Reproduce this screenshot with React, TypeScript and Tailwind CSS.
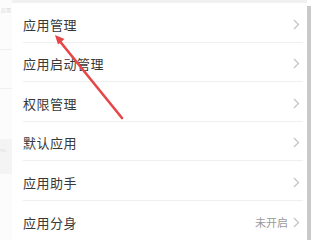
import React from "react";

const rows = [
  { label: "应用管理" },
  { label: "应用启动管理" },
  { label: "权限管理" },
  { label: "默认应用" },
  { label: "应用助手" },
  { label: "应用分身", value: "未开启" },
];

function Chevron() {
  return (
    <svg width="7" height="11" viewBox="0 0 7 11" fill="none">
      <path d="M1 1l4.5 4.5L1 10" stroke="#c4c4c4" strokeWidth="1.3" />
    </svg>
  );
}

export default function App() {
  return (
    <div
      className="relative w-[320px] h-[240px] bg-white overflow-hidden flex"
      style={{ fontFamily: '"Noto Sans CJK SC", "Noto Sans", sans-serif' }}
    >
      {/* faint background page on the left */}
      <div className="w-[12px] flex flex-col bg-[#fcfcfc]">
        <div className="mt-[7px] ml-[1px] text-[5px] leading-[6px] text-[#d4d4d4] whitespace-nowrap">应用</div>
        <div className="mt-[36px] h-px bg-[#efefef]" />
        <div className="mt-[38px] h-px bg-[#f0f0f0]" />
        <div className="mt-[50px] h-[35px] bg-[#f4f4f4] flex items-start">
          <span className="mt-[8px] text-[4px] text-[#dcdcdc] whitespace-nowrap">ms</span>
        </div>
      </div>

      <div className="w-[295px] flex flex-col">
        <div className="h-[6px] bg-[#f1f1f1]" />
        <div className="ml-[11px] mr-[4px] flex flex-col">
          {rows.map((r, i) => (
            <div
              key={r.label}
              className={`h-[39.5px] pt-[4px] flex items-center justify-between pr-[3px] ${
                i < rows.length - 1 ? "border-b border-[#efefef]" : ""
              }`}
            >
              <span className="text-[13px] text-[#383838] tracking-[0.5px]">{r.label}</span>
              <div className="flex items-center gap-[5px]">
                {r.value && <span className="text-[11px] text-[#9a9a9a]">{r.value}</span>}
                <Chevron />
              </div>
            </div>
          ))}
        </div>
      </div>

      <div className="mt-[6px] w-[4px] bg-[#c9c9c9]" />
      <div className="flex-1 bg-white" />

      <svg className="absolute left-0 top-0" width="320" height="240" viewBox="0 0 320 240">
        <line x1="122" y1="118" x2="58" y2="39" stroke="#e64646" strokeWidth="2.6" strokeLinecap="round" />
        <path d="M55 35 L64.5 39 L58 44.5 Z" fill="#e64646" />
      </svg>
    </div>
  );
}
